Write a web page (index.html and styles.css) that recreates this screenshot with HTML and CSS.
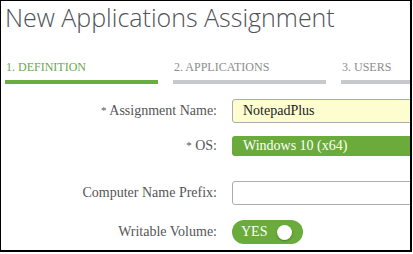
FILE: index.html
```html
<!DOCTYPE html>
<html lang="en">
<head>
    <meta charset="UTF-8">
    <title>New Applications Assignment</title>
    <link rel="stylesheet" href="styles.css">
</head>
<body>
    <div class="frame">
        <h1 class="title">New Applications Assignment</h1>

        <div class="steps">
            <div class="step active">
                <span class="step-label">1. DEFINITION</span>
                <span class="step-bar"></span>
            </div>
            <div class="step">
                <span class="step-label">2. APPLICATIONS</span>
                <span class="step-bar"></span>
            </div>
            <div class="step">
                <span class="step-label">3. USERS</span>
                <span class="step-bar"></span>
            </div>
        </div>

        <form class="form">
            <div class="row row-name">
                <label class="label" for="name"><span class="req">*</span> Assignment Name:</label>
                <input id="name" class="field field-filled" type="text" value="NotepadPlus">
            </div>
            <div class="row row-os">
                <label class="label"><span class="req">*</span> OS:</label>
                <div class="select">Windows 10 (x64)</div>
            </div>
            <div class="row row-prefix">
                <label class="label" for="prefix">Computer Name Prefix:</label>
                <input id="prefix" class="field" type="text">
            </div>
            <div class="row row-volume">
                <label class="label">Writable Volume:</label>
                <div class="toggle">
                    <span class="toggle-text">YES</span>
                    <span class="toggle-knob"></span>
                </div>
            </div>
        </form>
    </div>
</body>
</html>
```

FILE: styles.css
```css
* {
    box-sizing: border-box;
}

body {
    margin: 0;
    background: #fff;
    font-family: 'Liberation Serif', 'Times New Roman', serif;
}

.frame {
    width: 412px;
    height: 252px;
    border-style: solid;
    border-color: #000;
    border-width: 1px 2px 2px 1px;
    overflow: hidden;
    background: #fff;
}

.title {
    margin: 0;
    padding-left: 4px;
    font-family: 'Open Sans', sans-serif;
    font-weight: 300;
    font-size: 25px;
    line-height: 33px;
    color: #4f5256;
    white-space: nowrap;
}

.steps {
    display: flex;
    gap: 15px;
    margin-top: 25px;
    padding-left: 4px;
}

.step {
    display: flex;
    flex-direction: column;
    flex: 0 0 153px;
}

.step-label {
    font-size: 12px;
    line-height: 16px;
    color: #8c8c8c;
    padding-left: 1px;
    white-space: nowrap;
}

.step-bar {
    height: 4px;
    margin-top: 5px;
    background: #c8c9cc;
}

.step.active .step-label {
    color: #6aa84f;
}

.step.active .step-bar {
    background: #6cab3f;
}

.form {
    margin-top: 15px;
}

.row {
    display: grid;
    grid-template-columns: 216px 200px;
    column-gap: 15px;
    align-items: center;
}

.row-os {
    margin-top: 13px;
}

.row-prefix {
    margin-top: 25px;
}

.row-volume {
    margin-top: 15px;
}

.label {
    text-align: right;
    font-size: 14px;
    color: #555;
    white-space: nowrap;
}

.req {
    font-size: 11px;
    vertical-align: 1px;
}

.field {
    height: 24px;
    width: 200px;
    padding: 0 10px;
    border: 1px solid #a9acb0;
    border-radius: 3px;
    font-family: 'Liberation Serif', 'Times New Roman', serif;
    font-size: 14px;
    color: #222;
    background: #fff;
}

.field-filled {
    background: #fdfdd0;
}

.select {
    height: 20px;
    line-height: 20px;
    padding-left: 11px;
    border-radius: 3px;
    background: #6aab3b;
    color: #fff;
    font-size: 14px;
}

.toggle {
    display: flex;
    align-items: center;
    justify-content: space-between;
    width: 71px;
    height: 24px;
    padding: 0 11px 0 9px;
    border-radius: 12px;
    background: #6aab3b;
}

.toggle-text {
    color: #fff;
    font-size: 14px;
}

.toggle-knob {
    width: 15px;
    height: 15px;
    border-radius: 50%;
    background: #fff;
    box-shadow: 0 1px 2px rgba(0, 0, 0, 0.3);
}
```
